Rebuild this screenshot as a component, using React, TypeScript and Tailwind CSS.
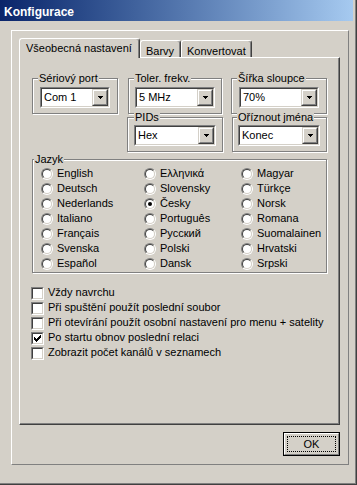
import React from 'react';

const languages: { label: string; checked?: boolean }[][] = [
  [
    { label: 'English' },
    { label: 'Deutsch' },
    { label: 'Nederlands' },
    { label: 'Italiano' },
    { label: 'Français' },
    { label: 'Svenska' },
    { label: 'Español' },
  ],
  [
    { label: 'Ελληνικά' },
    { label: 'Slovensky' },
    { label: 'Česky', checked: true },
    { label: 'Português' },
    { label: 'Русский' },
    { label: 'Polski' },
    { label: 'Dansk' },
  ],
  [
    { label: 'Magyar' },
    { label: 'Türkçe' },
    { label: 'Norsk' },
    { label: 'Romana' },
    { label: 'Suomalainen' },
    { label: 'Hrvatski' },
    { label: 'Srpski' },
  ],
];

const options = [
  { label: 'Vždy navrchu' },
  { label: 'Při spuštění použít poslední soubor' },
  { label: 'Při otevírání použít osobní nastavení pro menu + satelity' },
  { label: 'Po startu obnov poslední relaci', checked: true },
  { label: 'Zobrazit počet kanálů v seznamech' },
];

function Arrow() {
  return (
    <svg width="5" height="3" viewBox="0 0 5 3" shapeRendering="crispEdges">
      <rect x="0" y="0" width="5" height="1" fill="#000" />
      <rect x="1" y="1" width="3" height="1" fill="#000" />
      <rect x="2" y="2" width="1" height="1" fill="#000" />
    </svg>
  );
}

function Combo({ value }: { value: string }) {
  return (
    <div className="h-[21px] border border-t-[#808080] border-l-[#808080] border-r-white border-b-white">
      <div className="flex h-full border border-t-[#404040] border-l-[#404040] border-r-[#d4d0c8] border-b-[#d4d0c8] bg-white">
        <span className="flex-1 pl-[2px] pt-[2px] leading-[13px]">{value}</span>
        <div className="w-[16px] h-full border border-t-[#d4d0c8] border-l-[#d4d0c8] border-r-[#404040] border-b-[#404040] bg-[#d4d0c8]">
          <div className="flex h-full items-center justify-center border border-t-white border-l-white border-r-[#808080] border-b-[#808080]">
            <Arrow />
          </div>
        </div>
      </div>
    </div>
  );
}

function Group({
  title,
  titleLeft,
  className,
  children,
}: {
  title: string;
  titleLeft: string;
  className: string;
  children: React.ReactNode;
}) {
  return (
    <div className={`relative border border-[#808080] shadow-[inset_1px_1px_0_#fff,1px_1px_0_#fff] ${className}`}>
      <span className={`absolute top-[-7px] ${titleLeft} bg-[#d4d0c8] px-[1px] leading-[13px]`}>{title}</span>
      {children}
    </div>
  );
}

function Radio({ label, checked }: { label: string; checked?: boolean }) {
  return (
    <div className="flex h-[15px] items-center gap-[4px]">
      <div className="w-[12px] h-[12px] shrink-0 rounded-full border border-t-[#808080] border-l-[#808080] border-r-white border-b-white">
        <div className="flex h-full items-center justify-center rounded-full border border-t-[#404040] border-l-[#404040] border-r-[#d4d0c8] border-b-[#d4d0c8] bg-white">
          {checked && <div className="w-[4px] h-[4px] rounded-full bg-black" />}
        </div>
      </div>
      <span className="leading-[13px]">{label}</span>
    </div>
  );
}

function Check({ label, checked }: { label: string; checked?: boolean }) {
  return (
    <div className="flex h-[15px] items-start gap-[4px]">
      <div className="mt-[1px] w-[13px] h-[13px] shrink-0 border border-t-[#808080] border-l-[#808080] border-r-white border-b-white">
        <div className="flex h-full items-center justify-center border border-t-[#404040] border-l-[#404040] border-r-[#d4d0c8] border-b-[#d4d0c8] bg-white">
          {checked && (
            <svg width="7" height="7" viewBox="0 0 7 7" shapeRendering="crispEdges">
              <rect x="0" y="2" width="1" height="3" fill="#000" />
              <rect x="1" y="3" width="1" height="3" fill="#000" />
              <rect x="2" y="4" width="1" height="3" fill="#000" />
              <rect x="3" y="3" width="1" height="3" fill="#000" />
              <rect x="4" y="2" width="1" height="3" fill="#000" />
              <rect x="5" y="1" width="1" height="3" fill="#000" />
              <rect x="6" y="0" width="1" height="3" fill="#000" />
            </svg>
          )}
        </div>
      </div>
      <span className="leading-[13px]">{label}</span>
    </div>
  );
}

export default function App() {
  return (
    <div className="w-[357px] h-[485px] flex flex-col bg-[#d4d0c8] border-r border-b border-[#404040] text-[11px] text-black font-['Liberation_Sans',Arial,sans-serif]">
      <div className="flex flex-1 flex-col border-r border-b border-[#808080]">
        {/* Title bar */}
        <div className="mr-[2px] h-[21px] shrink-0 bg-linear-to-r from-[#0a246a] to-[#a6caf0] pl-[4px] pt-[4px]">
          <span className="text-[12px] font-bold leading-[14px] text-white">Konfigurace</span>
        </div>

        {/* Body */}
        <div className="pl-[11px] pt-[9px]">
          <div className="flex w-[338px] h-[435px] flex-col border border-t-white border-l-white border-r-[#808080] border-b-[#808080] pt-[7px] pl-[7px] pr-[8px]">
            {/* Tabs */}
            <div className="flex h-[19px] items-end">
              <div className="relative z-10 -mb-px w-[121px] h-[20px] rounded-t-[3px] border-t border-l border-r border-t-white border-l-white border-r-[#404040] bg-[#d4d0c8] pl-[6px] pt-[3px] leading-[13px] shadow-[inset_-1px_0_0_#808080]">
                Všeobecná nastavení
              </div>
              <div className="w-[41px] h-[17px] rounded-t-[3px] border-t border-l border-r border-t-white border-l-white border-r-[#404040] pl-[5px] pt-[4px] leading-[13px] shadow-[inset_-1px_0_0_#808080]">
                Barvy
              </div>
              <div className="w-[71px] h-[17px] rounded-t-[3px] border-t border-l border-r border-t-white border-l-white border-r-[#404040] pl-[5px] pt-[4px] leading-[13px] shadow-[inset_-1px_0_0_#808080]">
                Konvertovat
              </div>
            </div>

            {/* Tab panel */}
            <div className="h-[368px] border border-t-white border-l-white border-r-[#404040] border-b-[#404040] pt-[20px] pl-[12px] shadow-[inset_-1px_-1px_0_#808080]">
              <div className="flex">
                <Group title="Sériový port" titleLeft="left-[5px]" className="w-[86px] h-[36px] px-[7px] pt-[8px]">
                  <Combo value="Com 1" />
                </Group>
                <Group title="Toler. frekv." titleLeft="left-[5px]" className="ml-[10px] w-[94px] h-[36px] px-[6px] pt-[8px]">
                  <Combo value="5 MHz" />
                </Group>
                <Group title="Šířka sloupce" titleLeft="left-[5px]" className="ml-[9px] w-[96px] h-[36px] px-[7px] pt-[8px]">
                  <Combo value="70%" />
                </Group>
              </div>

              <div className="mt-[3px] flex pl-[95px]">
                <Group title="PIDs" titleLeft="left-[6px]" className="w-[96px] h-[35px] px-[6px] pt-[7px]">
                  <Combo value="Hex" />
                </Group>
                <Group title="Oříznout jména" titleLeft="left-[4px]" className="ml-[9px] w-[95px] h-[35px] pl-[5px] pr-[6px] pt-[7px]">
                  <Combo value="Konec" />
                </Group>
              </div>

              <Group title="Jazyk" titleLeft="left-[1px]" className="mt-[7px] w-[295px] h-[114px] pl-[8px] pt-[6px]">
                <div className="flex">
                  {languages.map((col, i) => (
                    <div key={i} className={i === 0 ? 'w-[103px]' : i === 1 ? 'w-[97px]' : 'flex-1'}>
                      {col.map((l) => (
                        <Radio key={l.label} label={l.label} checked={l.checked} />
                      ))}
                    </div>
                  ))}
                </div>
              </Group>

              <div className="mt-[13px] -ml-px">
                {options.map((o) => (
                  <Check key={o.label} label={o.label} checked={o.checked} />
                ))}
              </div>
            </div>

            {/* Buttons */}
            <div className="mt-[7px] flex justify-end">
              <div className="w-[57px] h-[24px] border border-black">
                <div className="h-full border border-t-white border-l-white border-r-[#808080] border-b-[#808080] p-[2px]">
                  <div className="flex h-full items-center justify-center border border-dotted border-black leading-[13px]">
                    OK
                  </div>
                </div>
              </div>
            </div>
          </div>
        </div>
      </div>
    </div>
  );
}
